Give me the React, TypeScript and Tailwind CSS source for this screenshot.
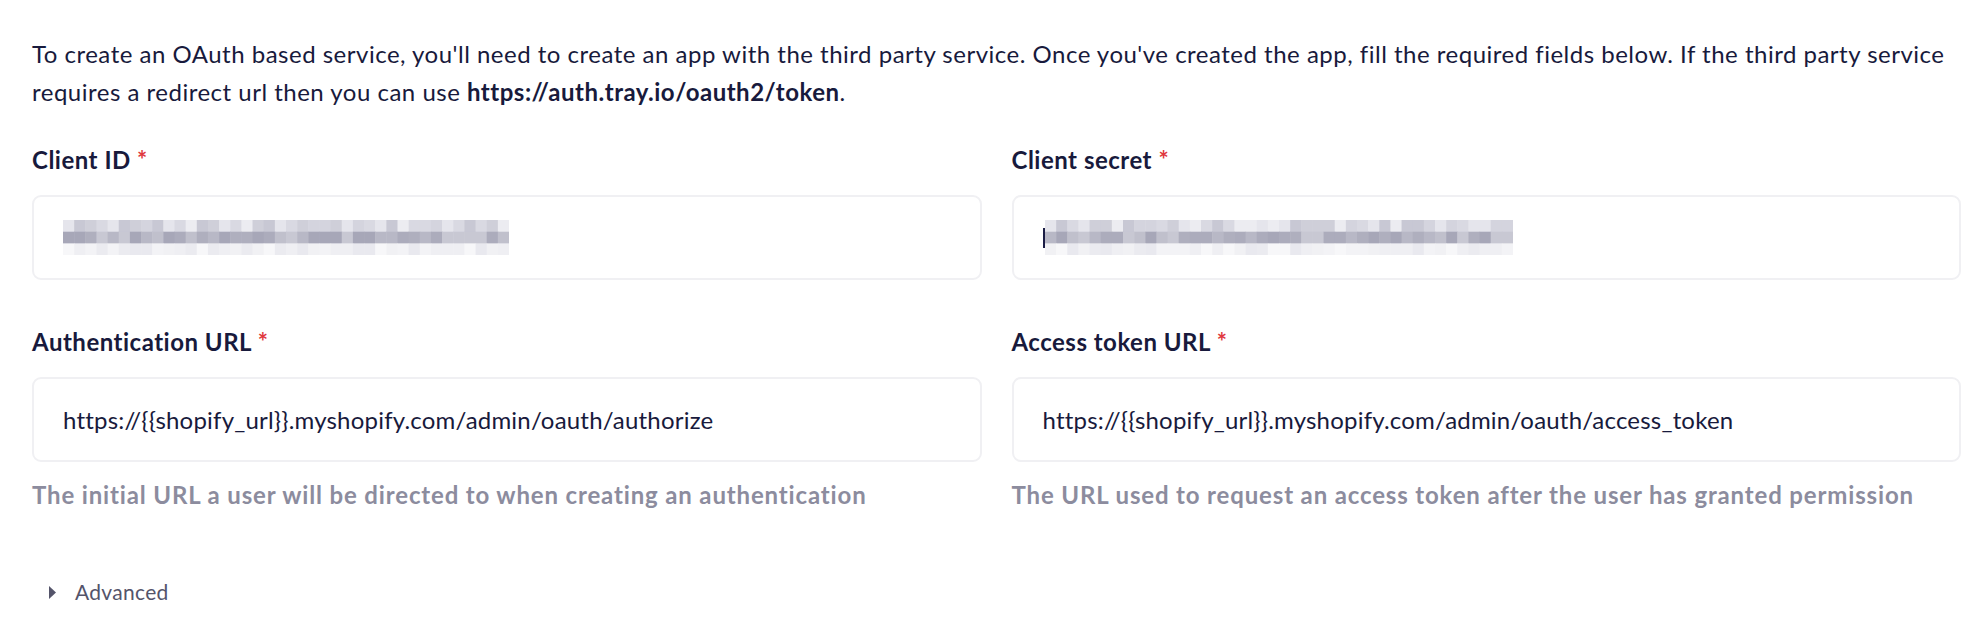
import React from "react";

function rng(seed: number) {
  let s = seed;
  return () => {
    s = (s * 9301 + 49297) % 233280;
    return s / 233280;
  };
}

const rowPalettes = [
  ["#cfcfd9", "#d9d9e2", "#e5e5ec", "#c8c8d4", "#ececf1", "#d4d4de"],
  ["#afafbe", "#b8b8c6", "#a7a7b8", "#c0c0cc", "#acacbc", "#c8c8d3"],
  ["#efeff3", "#f3f3f6", "#ebebf0", "#f7f7f9", "#e9e9ef", "#f1f1f4"],
];

function Blur({ width, seed, cols }: { width: number; seed: number; cols: number }) {
  const r = rng(seed);
  const cw = width / cols;
  const rh = 11.7;
  const rects: React.ReactNode[] = [];
  for (let row = 0; row < 3; row++) {
    for (let c = 0; c < cols; c++) {
      const pal = rowPalettes[row];
      const color = pal[Math.floor(r() * pal.length)];
      rects.push(
        <rect key={`${row}-${c}`} x={c * cw} y={row * rh} width={cw + 0.5} height={rh + 0.5} fill={color} />
      );
    }
  }
  return (
    <svg width={width} height={35} viewBox={`0 0 ${width} 35`} className="block">
      {rects}
    </svg>
  );
}

function Label({ children }: { children: React.ReactNode }) {
  return (
    <div className="text-[24px] leading-[30px] font-bold tracking-[0.5px] text-[#181a3c] mb-[20px]">
      {children} <span className="text-[#e0383e]">*</span>
    </div>
  );
}

function Box({ children }: { children: React.ReactNode }) {
  return (
    <div className="h-[85px] border-2 border-[#f0f0f3] rounded-[9px] bg-white flex items-center pl-[29px]">
      {children}
    </div>
  );
}

function Helper({ children }: { children: React.ReactNode }) {
  return (
    <div className="mt-[18px] text-[24px] leading-[30px] font-bold tracking-[0.85px] text-[#8c8c9e]">{children}</div>
  );
}

export default function App() {
  return (
    <div
      className="w-[1987px] h-[626px] bg-white pl-[32px] pr-[26px] pt-[35px] overflow-hidden"
      style={{ fontFamily: "Lato, 'Noto Sans', sans-serif" }}
    >
      <p className="text-[24px] leading-[38px] tracking-[0.5px] text-[#181a3c] whitespace-nowrap">
        To create an OAuth based service, you'll need to create an app with the third party service. Once you've created the app, fill the required fields below. If the third party service
        <br />
        requires a redirect url then you can use <span className="font-bold">https://auth.tray.io/oauth2/token</span>.
      </p>

      <div className="grid grid-cols-2 gap-x-[30px] gap-y-[47px] mt-[34px]">
        <div>
          <Label>Client ID</Label>
          <Box>
            <Blur width={446} seed={7} cols={40} />
          </Box>
        </div>
        <div>
          <Label>Client secret</Label>
          <Box>
            <div className="flex items-center">
              <div className="w-[2px] h-[20px] bg-[#1b1d45]" />
              <Blur width={468} seed={31} cols={42} />
            </div>
          </Box>
        </div>
        <div>
          <Label>Authentication URL</Label>
          <Box>
            <span className="text-[24px] tracking-[0.2px] text-[#181a3c]">https://{"{{"}shopify_url{"}}"}.myshopify.com/admin/oauth/authorize</span>
          </Box>
          <Helper>The initial URL a user will be directed to when creating an authentication</Helper>
        </div>
        <div>
          <Label>Access token URL</Label>
          <Box>
            <span className="text-[24px] tracking-[0.2px] text-[#181a3c]">https://{"{{"}shopify_url{"}}"}.myshopify.com/admin/oauth/access_token</span>
          </Box>
          <Helper>The URL used to request an access token after the user has granted permission</Helper>
        </div>
      </div>

      <div className="mt-[68px] flex items-center pl-[17px] gap-[19px] text-[#54546a]">
        <svg width="7" height="13" viewBox="0 0 7 13" className="block">
          <path d="M0 0 L7 6.5 L0 13 Z" fill="#54546a" />
        </svg>
        <span className="text-[21px] leading-[28px] tracking-[0.3px]">Advanced</span>
      </div>
    </div>
  );
}
